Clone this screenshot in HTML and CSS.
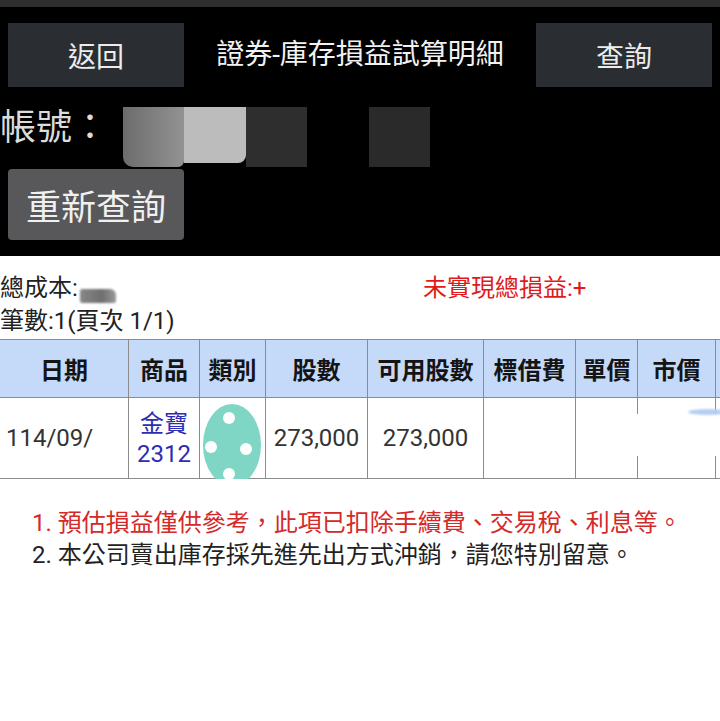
FILE: index.html
```html
<!DOCTYPE html>
<html lang="zh-Hant">
<head>
<meta charset="utf-8">
<title>證券-庫存損益試算明細</title>
<link rel="stylesheet" href="styles.css">
</head>
<body>
<div class="page">
  <div class="dark">
    <div class="statusbar"></div>
    <div class="topbar">
      <div class="btn">返回</div>
      <div class="title">證券-庫存損益試算明細</div>
      <div class="btn">查詢</div>
    </div>
    <div class="account">
      <span class="acc-label">帳號：</span>
      <span class="blk blk1"></span>
      <span class="blk blk2"></span>
      <span class="blk blk3"></span>
      <span class="blk-gap"></span>
      <span class="blk blk4"></span>
    </div>
    <div class="requery">重新查詢</div>
  </div>
  <div class="light">
    <div class="summary">
      <div class="sum-left">總成本:<span class="smudge"></span></div>
      <div class="sum-right">未實現總損益:+</div>
    </div>
    <div class="count">筆數:1(頁次 1/1)</div>
    <div class="table-wrap">
      <table class="grid">
        <thead>
          <tr>
            <th class="c1">日期</th>
            <th class="c2">商品</th>
            <th class="c3">類別</th>
            <th class="c4">股數</th>
            <th class="c5">可用股數</th>
            <th class="c6">標借費</th>
            <th class="c7">單價</th>
            <th class="c8">市價</th>
            <th class="c9"></th>
          </tr>
        </thead>
        <tbody>
          <tr>
            <td class="date">114/09/</td>
            <td class="prod">金寶<br>2312</td>
            <td class="kind">
              <svg class="blob" width="64" height="86" viewBox="0 0 64 86">
                <ellipse cx="31" cy="43" rx="29" ry="41" fill="#80d6c4"/>
                <circle cx="28" cy="16" r="6" fill="#fff"/>
                <circle cx="10" cy="45" r="6" fill="#fff"/>
                <circle cx="45" cy="47" r="6" fill="#fff"/>
                <circle cx="28" cy="72" r="6" fill="#fff"/>
              </svg>
            </td>
            <td>273,000</td>
            <td>273,000</td>
            <td></td>
            <td></td>
            <td></td>
            <td></td>
          </tr>
        </tbody>
      </table>
      <div class="mask"></div>
      <div class="wisp"></div>
    </div>
    <div class="notes">
      <p class="note-red">1. 預估損益僅供參考，此項已扣除手續費、交易稅、利息等。</p>
      <p class="note">2. 本公司賣出庫存採先進先出方式沖銷，請您特別留意。</p>
    </div>
  </div>
</div>
</body>
</html>
```

FILE: styles.css
```css
* { box-sizing: border-box; }
html, body {
  margin: 0;
  padding: 0;
  background: #fff;
}
body {
  font-family: Roboto, "Noto Sans CJK TC", "Noto Sans", sans-serif;
  overflow: hidden;
  width: 720px;
}
.page { width: 720px; overflow: hidden; }

.dark {
  background: #000;
  height: 256px;
}
.statusbar {
  height: 7px;
  background: #2e2e2e;
}
.topbar {
  display: flex;
  align-items: center;
  padding: 16px 8px 0 8px;
}
.btn {
  width: 176px;
  height: 64px;
  background: #2a2e32;
  color: #ececec;
  font-size: 28px;
  display: flex;
  align-items: center;
  justify-content: center;
  flex: none;
}
.title {
  flex: 1;
  text-align: center;
  color: #f2f2f2;
  font-size: 28px;
  line-height: 64px;
  white-space: nowrap;
}
.account {
  display: flex;
  align-items: flex-start;
  height: 82px;
}
.acc-label {
  color: #dcdcdc;
  font-size: 36px;
  line-height: 82px;
  white-space: nowrap;
}
.blk {
  display: block;
  margin-top: 20px;
  height: 60px;
  width: 61px;
}
.blk1 {
  margin-left: 15px;
  background: linear-gradient(90deg, #6c6c6c, #929292);
  border-radius: 0 0 6px 10px;
}
.blk2 { width: 62px; background: #bcbcbc; height: 56px; border-radius: 0 0 8px 0; }
.blk3 { background: #2e2e2e; }
.blk-gap { display: block; width: 62px; }
.blk4 { background: #2a2a2a; }

.requery {
  margin-left: 8px;
  width: 176px;
  height: 71px;
  background: #58585a;
  border-radius: 4px;
  color: #f0f0f0;
  font-size: 35px;
  display: flex;
  align-items: center;
  justify-content: center;
}

.light {
  background: #fff;
  color: #222;
  font-size: 24px;
}
.summary {
  display: grid;
  grid-template-columns: 423px 1fr;
  padding-top: 16px;
  line-height: 33px;
  height: 49px;
}
.sum-left {
  display: flex;
  align-items: center;
  white-space: nowrap;
}
.smudge {
  display: inline-block;
  width: 36px;
  height: 14px;
  margin-top: 14px;
  margin-left: 2px;
  background: linear-gradient(90deg, #888, #6e6e6e 60%, #9a9a9a);
  border-radius: 2px 6px 2px 2px;
  filter: blur(1px);
}
.sum-right {
  color: #e01b1b;
  white-space: nowrap;
}
.count {
  line-height: 33px;
  height: 34px;
  white-space: nowrap;
}

.table-wrap {
  position: relative;
  width: 720px;
  overflow: hidden;
}
.grid {
  border-collapse: separate;
  border-spacing: 0;
  table-layout: fixed;
  width: 816px;
}
.grid th, .grid td {
  border-right: 1px solid #8c8c8c;
  border-bottom: 1px solid #8c8c8c;
  padding: 0;
  text-align: center;
  white-space: nowrap;
}
.grid th {
  border-top: 1px solid #8c8c8c;
  background: #c5d9f8;
  color: #141414;
  font-weight: 700;
  font-size: 24px;
  height: 59px;
}
.grid td {
  height: 81px;
  color: #333;
  font-size: 24px;
  line-height: 30px;
  vertical-align: middle;
}
.c1 { width: 129px; }
.c2 { width: 71px; }
.c3 { width: 66px; }
.c4 { width: 102px; }
.c5 { width: 116px; }
.c6 { width: 92px; }
.c7 { width: 62px; }
.c8 { width: 78px; }
.c9 { width: 100px; }

.grid td.date {
  text-align: left;
  padding-left: 6px;
}
.grid td.prod {
  color: #2d2db4;
  padding-top: 2px;
}
.grid td.kind {
  position: relative;
}
.blob {
  position: absolute;
  left: 1px;
  top: 4px;
}
.mask {
  position: absolute;
  left: 628px;
  top: 75px;
  width: 92px;
  height: 42px;
  background: #fff;
}
.wisp {
  position: absolute;
  left: 688px;
  top: 70px;
  width: 40px;
  height: 6px;
  border-radius: 50%;
  background: #b4cdf3;
  filter: blur(1px);
}

.notes {
  padding: 28px 0 0 32px;
}
.notes p {
  margin: 0;
  line-height: 32px;
  white-space: nowrap;
}
.note-red { color: #d42a2a; }
.note { color: #222; }
```
